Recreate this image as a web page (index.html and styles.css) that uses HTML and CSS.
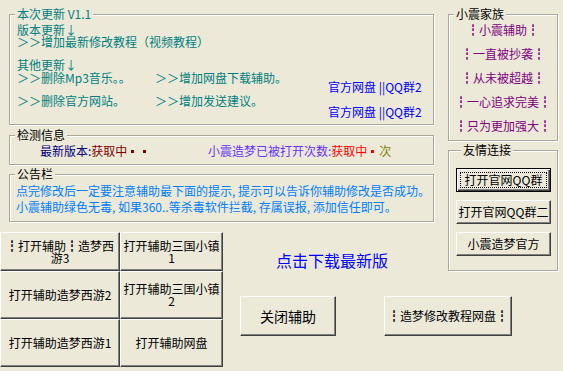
FILE: index.html
```html
<!DOCTYPE html>
<html lang="zh-CN">
<head>
<meta charset="UTF-8" />
<title>小震造梦辅助</title>
<link rel="stylesheet" href="styles.css">
</head>
<body>
    <div class="groups">
        <!-- 更新日志 -->
        <fieldset class="group news">
            <legend>本次更新 V1.1</legend>
            <p class="line">版本更新↓</p>
            <p class="line">＞＞增加最新修改教程（视频教程）</p>
            <p class="line gap">其他更新↓</p>
            <div class="updates">
                <div class="col">
                    <p class="line">＞＞删除Mp3音乐。。</p>
                    <p class="line">＞＞删除官方网站。</p>
                </div>
                <div class="col">
                    <p class="line">＞＞增加网盘下载辅助。</p>
                    <p class="line">＞＞增加发送建议。</p>
                </div>
                <div class="col links">
                    <a class="line link">官方网盘 ||QQ群2</a>
                    <a class="line link">官方网盘 ||QQ群2</a>
                </div>
            </div>
        </fieldset>

        <fieldset class="group check">
            <legend>检测信息</legend>
            <div class="status">
                <span class="stat first"><span class="navy">最新版本:</span><span class="maroon">获取中<i class="dot"></i><i class="dot"></i></span></span>
                <span class="stat"><span class="violet">小震造梦已被打开次数:</span><span class="red">获取中<i class="dot"></i></span><span class="olive">次</span></span>
            </div>
        </fieldset>

        <fieldset class="group notice">
            <legend>公告栏</legend>
            <p class="tip">点完修改后一定要注意辅助最下面的提示, 提示可以告诉你辅助修改是否成功。</p>
            <p class="tip">小震辅助绿色无毒, 如果360..等杀毒软件拦截, 存属误报, 添加信任即可。</p>
        </fieldset>
    </div>

    <div class="side">
        <fieldset class="group family">
            <legend>小震家族</legend>
            <p class="motto">┇小震辅助┇</p>
            <p class="motto">┇一直被抄袭┇</p>
            <p class="motto">┇从未被超越┇</p>
            <p class="motto">┇一心追求完美┇</p>
            <p class="motto">┇只为更加强大┇</p>
        </fieldset>

        <fieldset class="group friends">
            <legend>友情连接</legend>
            <button class="btn link-btn focus">打开官网QQ群</button>
            <button class="btn link-btn">打开官网QQ群二</button>
            <button class="btn link-btn">小震造梦官方</button>
        </fieldset>
    </div>

    <div class="launch">
        <button class="btn">┇打开辅助┇造梦西<br>游3</button>
        <button class="btn">打开辅助三国小镇<br>1</button>
        <button class="btn">打开辅助造梦西游2</button>
        <button class="btn">打开辅助三国小镇<br>2</button>
        <button class="btn">打开辅助造梦西游1</button>
        <button class="btn">打开辅助网盘</button>
    </div>

    <div class="download">点击下载最新版</div>

    <div class="actions">
        <button class="btn close">关闭辅助</button>
        <button class="btn tutorial">┇造梦修改教程网盘┇</button>
    </div>
</body>
</html>
```

FILE: styles.css
```css
/* General Reset */
* {
    margin: 0;
    padding: 0;
    box-sizing: border-box;
}

/* Window body */
body {
    width: 563px;
    height: 371px;
    overflow: hidden;
    background-color: #ece9d8;
    font-family: "Noto Sans CJK SC", "DejaVu Sans", sans-serif;
    font-size: 12px;
    color: #000;
    display: grid;
    grid-template-columns: 223px 225px 115px;
    grid-template-rows: 232px 60px 1fr;
}

/* Group boxes */
.group {
    border: 1px solid #aca899;
    box-shadow: 1px 1px 0 #fff, inset 1px 1px 0 #fff;
    min-width: 0;
}

.group legend {
    margin-left: 5px;
    padding: 0 2px;
    line-height: 14px;
    background-color: #ece9d8;
}

.line {
    display: block;
    line-height: 12px;
    white-space: nowrap;
}

/* Left column */
.groups {
    grid-column: 1 / 3;
    grid-row: 1;
    padding: 7px 14px 0 9px;
    display: flex;
    flex-direction: column;
}

.news {
    padding: 3px 0 6px;
    color: #008080;
}

.news > .line,
.updates {
    margin-left: 7px;
}

.news .gap {
    margin-top: 11px;
}

.updates {
    display: grid;
    grid-template-columns: 138px 173px 1fr;
    margin-top: 1px;
}

.updates .col {
    display: flex;
    flex-direction: column;
    gap: 11px;
}

.updates .links {
    padding-top: 9px;
    gap: 13px;
}

.link {
    color: #0000ff;
    cursor: pointer;
}

.check {
    margin-top: 3px;
    padding: 3px 0 7px;
}

.status {
    display: flex;
    margin-left: 30px;
    line-height: 12px;
    white-space: nowrap;
}

.stat.first {
    width: 168px;
}

.navy { color: #000080; }
.maroon { color: #800000; }
.violet { color: #6633ff; }
.red { color: #ff0000; }
.olive { color: #808000; }

.dot {
    display: inline-block;
    width: 12px;
    height: 12px;
    position: relative;
    vertical-align: top;
}

.dot::after {
    content: "";
    position: absolute;
    left: 4px;
    top: 5px;
    width: 3px;
    height: 3px;
    background-color: currentColor;
}

.notice {
    margin-top: 2px;
    padding: 2px 0 6px;
}

.tip {
    margin-left: 6px;
    line-height: 16px;
    color: #0080ff;
    white-space: nowrap;
}

/* Right column */
.side {
    grid-column: 3;
    grid-row: 1 / 3;
    padding: 7px 5px 0 0;
    display: flex;
    flex-direction: column;
}

.family {
    padding: 3px 0 8px;
    display: flex;
    flex-direction: column;
    gap: 12px;
}

.motto {
    line-height: 12px;
    text-align: center;
    color: #800080;
    white-space: nowrap;
}

.friends {
    margin-top: 2px;
    padding: 11px 0 14px 7px;
    display: flex;
    flex-direction: column;
    gap: 8px;
}

/* Buttons */
.btn {
    font-family: inherit;
    font-size: 12px;
    line-height: 12px;
    color: #000;
    background-color: #ece9d8;
    border: 1px solid;
    border-color: #fff #404040 #404040 #fff;
    box-shadow: inset -1px -1px 0 #808080;
    cursor: pointer;
    white-space: nowrap;
}

.btn.focus {
    border-color: #000;
    box-shadow: inset 1px 1px 0 #fff, inset -1px -1px 0 #404040, inset -2px -2px 0 #808080;
    outline: 1px dotted #000;
    outline-offset: -5px;
}

.link-btn {
    width: 95px;
    height: 24px;
}

.launch {
    grid-column: 1;
    grid-row: 2 / 4;
    display: grid;
    grid-template-columns: 120px 103px;
    grid-template-rows: 39px 48px 48px;
}

.download {
    grid-column: 2;
    grid-row: 2;
    padding: 18px 7px 0 0;
    font-size: 16px;
    line-height: 20px;
    text-align: center;
    color: #0000ff;
}

.actions {
    grid-column: 2 / 4;
    grid-row: 3;
    padding: 4px 0 0 17px;
    display: flex;
    align-items: flex-start;
    gap: 48px;
}

.close {
    width: 96px;
    height: 40px;
    font-size: 14px;
}

.tutorial {
    width: 128px;
    height: 40px;
}
```
